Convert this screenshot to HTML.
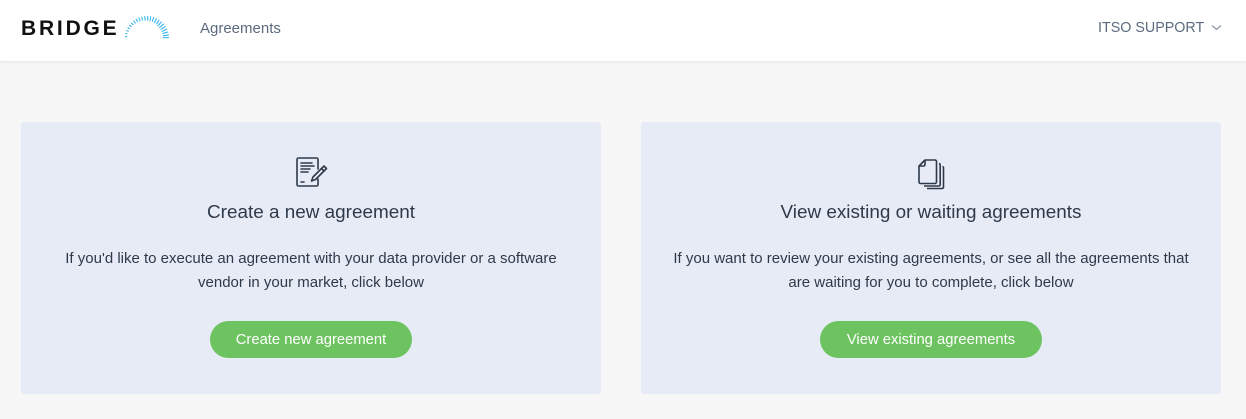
<!DOCTYPE html>
<html><head><meta charset="utf-8"><style>
*{margin:0;padding:0;box-sizing:border-box}
body{width:1246px;height:419px;background:#f7f7f7;font-family:"Liberation Sans",sans-serif;position:relative;overflow:hidden}
.hdr{position:absolute;left:0;top:0;width:1246px;height:61px;background:#fff;box-shadow:0 1px 4px rgba(0,0,0,0.08)}
.logo{position:absolute;left:21px;top:17px;font-size:21px;font-weight:bold;letter-spacing:2.8px;color:#111}
.nav{position:absolute;left:200px;top:20px;font-size:15px;color:#5b6b7d}
.user{position:absolute;left:1098px;top:20px;font-size:14.3px;color:#5b6b7d}
.card{position:absolute;top:122px;width:580px;height:272px;background:#e7ebf6;border-radius:3px;text-align:center;color:#2e3a4a}
.card h2{position:absolute;top:80px;width:100%;font-size:18.9px;font-weight:normal}
.card p{position:absolute;top:125px;width:100%;font-size:15px;line-height:24px;color:#2e3a4a}
.btn{position:absolute;top:199px;height:37px;border-radius:19px;background:#6cc35f;color:#fff;font-size:14.8px;line-height:39px}
.icon{position:absolute;top:34px}
</style></head><body>
<div class="hdr">
<div class="logo">BRIDGE</div>
<svg style="position:absolute;left:0;top:0" width="200" height="61">
<g stroke="#3bb6ea" stroke-width="1.1">
<line x1="147" y1="16" x2="147" y2="18" transform="rotate(-86 147 38)"/>
<line x1="147" y1="16" x2="147" y2="18" transform="rotate(-78 147 38)"/>
<line x1="147" y1="16" x2="147" y2="18.5" transform="rotate(-70 147 38)"/>
<line x1="147" y1="16" x2="147" y2="18.5" transform="rotate(-62 147 38)"/>
<line x1="147" y1="16" x2="147" y2="19" transform="rotate(-54 147 38)"/>
<line x1="147" y1="16" x2="147" y2="19" transform="rotate(-46 147 38)"/>
<line x1="147" y1="16" x2="147" y2="19.5" transform="rotate(-38 147 38)"/>
<line x1="147" y1="16" x2="147" y2="19.5" transform="rotate(-30 147 38)"/>
<line x1="147" y1="16" x2="147" y2="20" transform="rotate(-22 147 38)"/>
<line x1="147" y1="16" x2="147" y2="20" transform="rotate(-14 147 38)"/>
<line x1="147" y1="16" x2="147" y2="20.5" transform="rotate(-6 147 38)"/>
<line x1="147" y1="16" x2="147" y2="20.5" transform="rotate(2 147 38)"/>
<line x1="147" y1="16" x2="147" y2="21" transform="rotate(10 147 38)"/>
<line x1="147" y1="16" x2="147" y2="21" transform="rotate(18 147 38)"/>
<line x1="147" y1="16" x2="147" y2="21.5" transform="rotate(26 147 38)"/>
<line x1="147" y1="16" x2="147" y2="21.5" transform="rotate(34 147 38)"/>
<line x1="147" y1="16" x2="147" y2="22" transform="rotate(42 147 38)"/>
<line x1="147" y1="16" x2="147" y2="22" transform="rotate(50 147 38)"/>
<line x1="147" y1="16" x2="147" y2="22" transform="rotate(58 147 38)"/>
<line x1="147" y1="16" x2="147" y2="22" transform="rotate(66 147 38)"/>
<line x1="147" y1="16" x2="147" y2="22" transform="rotate(74 147 38)"/>
<line x1="147" y1="16" x2="147" y2="22" transform="rotate(82 147 38)"/>
<line x1="147" y1="16" x2="147" y2="22" transform="rotate(89 147 38)"/>
</g></svg>
<div class="nav">Agreements</div>
<div class="user">ITSO SUPPORT</div>
<svg style="position:absolute;left:1211px;top:24px" width="12" height="8"><path d="M1 1.5L5.5 5.5L10 1.5" fill="none" stroke="#8a97a6" stroke-width="1.2"/></svg>
</div>

<div class="card" style="left:21px">
<svg class="icon" style="left:274px" width="34" height="34" viewBox="0 0 34 34" fill="none" stroke="#2e3a4a" stroke-width="1.6" stroke-linecap="round" stroke-linejoin="round">
<path d="M23 13V3.5a1.5 1.5 0 0 0-1.5-1.5H3.5A1.5 1.5 0 0 0 2 3.5v25A1.5 1.5 0 0 0 3.5 30h18a1.5 1.5 0 0 0 1.5-1.5V23"/>
<path d="M6 7h11M6 10h13M6 13h9M6 16h7M6 26h3"/>
<path d="M29 10l2.5 2.5-11 11-4 1.5 1.5-4z"/>
<path d="M26.5 12.5L29 15"/>
</svg>
<h2>Create a new agreement</h2>
<p>If you'd like to execute an agreement with your data provider or a software<br>vendor in your market, click below</p>
<div class="btn" style="left:189px;width:202px">Create new agreement</div>
</div>

<div class="card" style="left:641px">
<svg class="icon" style="left:274px" width="34" height="34" viewBox="0 0 34 34" fill="none" stroke="#2e3a4a" stroke-width="1.6" stroke-linejoin="round">
<path d="M10 4h10a1.5 1.5 0 0 1 1.5 1.5V26a1.5 1.5 0 0 1-1.5 1.5H5.5A1.5 1.5 0 0 1 4 26V10z"/>
<path d="M4 10h4.5A1.5 1.5 0 0 0 10 8.5V4"/>
<path d="M24 7.5a1.5 1.5 0 0 1 1.2 1.5V28.5a1.5 1.5 0 0 1-1.5 1.5H9"/>
<path d="M27.5 10.5a1.5 1.5 0 0 1 1 1.5V31a1.5 1.5 0 0 1-1.5 1.5H12"/>
</svg>
<h2>View existing or waiting agreements</h2>
<p>If you want to review your existing agreements, or see all the agreements that<br>are waiting for you to complete, click below</p>
<div class="btn" style="left:179px;width:222px">View existing agreements</div>
</div>
</body></html>
